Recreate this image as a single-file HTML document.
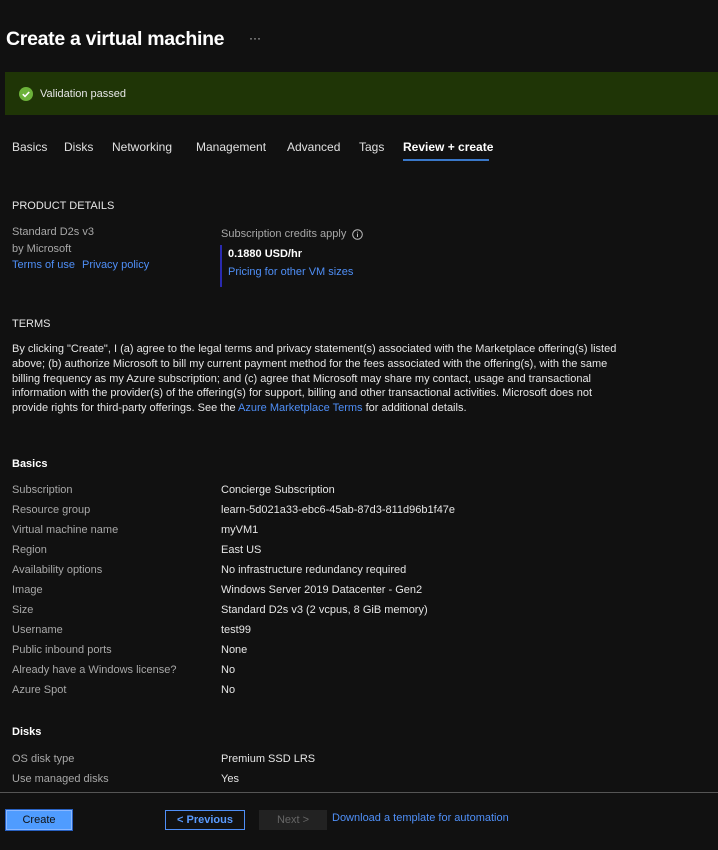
<!DOCTYPE html>
<html><head><style>
body{margin:0;width:718px;height:850px;background:#111;color:#e6e6e6;font-family:"Liberation Sans",sans-serif;font-size:11px;position:relative;overflow:hidden}
.a{position:absolute;white-space:nowrap}
.lbl{color:#a8a8a8}
.lnk{color:#4f8ff7}
h1{position:absolute;left:6px;top:28px;margin:0;font-size:19.5px;font-weight:bold;color:#fff;letter-spacing:-0.3px}
.tab{position:absolute;top:140px;color:#e0e0e0;font-size:12px}
</style></head><body>
<h1>Create a virtual machine</h1>
<div class="a" style="left:249px;top:31px;color:#ccc;font-size:12px">···</div>
<div class="a" style="left:5px;top:72px;width:713px;height:43px;background:#1f3506"></div>
<svg class="a" style="left:19px;top:87px" width="14" height="14"><circle cx="7" cy="7" r="7" fill="#6cb23a"/><path d="M3.8 7.2l2.2 2.2 4.2-4.4" stroke="#fff" stroke-width="1.6" fill="none"/></svg>
<div class="a" style="left:40px;top:88px">Validation passed</div>
<div class="tab" style="left:12px">Basics</div>
<div class="tab" style="left:64px">Disks</div>
<div class="tab" style="left:112px">Networking</div>
<div class="tab" style="left:196px">Management</div>
<div class="tab" style="left:287px">Advanced</div>
<div class="tab" style="left:359px">Tags</div>
<div class="tab" style="left:403px;color:#fff;font-weight:bold">Review + create</div>
<div class="a" style="left:403px;top:159px;width:86px;height:2px;background:#3a78c9"></div>

<div class="a" style="left:12px;top:200px">PRODUCT DETAILS</div>
<div class="a lbl" style="left:12px;top:226px">Standard D2s v3</div>
<div class="a lbl" style="left:12px;top:243px">by Microsoft</div>
<div class="a lnk" style="left:12px;top:259px">Terms of use</div>
<div class="a lnk" style="left:82px;top:259px">Privacy policy</div>
<div class="a lbl" style="left:221px;top:228px">Subscription credits apply</div>
<svg class="a" style="left:352px;top:229px" width="11" height="11"><circle cx="5.5" cy="5.5" r="4.8" stroke="#bbb" fill="none"/><path d="M5.5 4.5v3.5M5.5 2.8v0.8" stroke="#bbb"/></svg>
<div class="a" style="left:220px;top:245px;width:2px;height:42px;background:#2a2ab0"></div>
<div class="a" style="left:228px;top:248px;font-weight:bold;color:#fff">0.1880 USD/hr</div>
<div class="a lnk" style="left:228px;top:266px">Pricing for other VM sizes</div>

<div class="a" style="left:12px;top:318px">TERMS</div>
<div class="a" style="left:12px;top:342px;line-height:14.8px;width:610px;white-space:normal">By clicking "Create", I (a) agree to the legal terms and privacy statement(s) associated with the Marketplace offering(s) listed above; (b) authorize Microsoft to bill my current payment method for the fees associated with the offering(s), with the same billing frequency as my Azure subscription; and (c) agree that Microsoft may share my contact, usage and transactional information with the provider(s) of the offering(s) for support, billing and other transactional activities. Microsoft does not provide rights for third-party offerings. See the <span class="lnk">Azure Marketplace Terms</span> for additional details.</div>

<div class="a" style="left:12px;top:458px;font-weight:bold;color:#fff">Basics</div>
<div class="a lbl" style="left:12px;top:480px;line-height:20px">Subscription<br>Resource group<br>Virtual machine name<br>Region<br>Availability options<br>Image<br>Size<br>Username<br>Public inbound ports<br>Already have a Windows license?<br>Azure Spot</div>
<div class="a" style="left:221px;top:480px;line-height:20px">Concierge Subscription<br>learn-5d021a33-ebc6-45ab-87d3-811d96b1f47e<br>myVM1<br>East US<br>No infrastructure redundancy required<br>Windows Server 2019 Datacenter - Gen2<br>Standard D2s v3 (2 vcpus, 8 GiB memory)<br>test99<br>None<br>No<br>No</div>

<div class="a" style="left:12px;top:726px;font-weight:bold;color:#fff">Disks</div>
<div class="a lbl" style="left:12px;top:749px;line-height:20px">OS disk type<br>Use managed disks</div>
<div class="a" style="left:221px;top:749px;line-height:20px">Premium SSD LRS<br>Yes</div>

<div class="a" style="left:0;top:792px;width:718px;height:1px;background:#555"></div>
<div class="a" style="left:6px;top:810px;width:64px;height:18px;background:#4f9cff;border:1px solid #8bb8ff;box-shadow:0 0 0 1px #2860c0;color:#111;text-align:center;line-height:18px">Create</div>
<div class="a" style="left:165px;top:810px;width:78px;height:18px;border:1px solid #4f8ff7;color:#5a9bff;text-align:center;line-height:18px;font-weight:bold">&lt; Previous</div>
<div class="a" style="left:259px;top:810px;width:68px;height:20px;background:#222;color:#666;text-align:center;line-height:20px">Next &gt;</div>
<div class="a lnk" style="left:332px;top:812px">Download a template for automation</div>
</body></html>
